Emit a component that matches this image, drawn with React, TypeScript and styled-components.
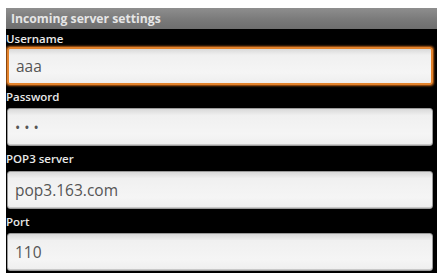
import React from 'react';
import styled, { createGlobalStyle } from 'styled-components';

const GlobalStyle = createGlobalStyle`
  html, body {
    margin: 0;
    padding: 0;
    background: #fff;
  }
  body {
    font-family: "Open Sans", "Noto Sans", sans-serif;
    overflow: hidden;
  }
`;

const Screen = styled.div`
  margin: 8px 0 0 6px;
  width: 431px;
  height: 265px;
  background: #000;
  display: flex;
  flex-direction: column;
  overflow: hidden;
`;

const TitleBar = styled.div`
  height: 21px;
  flex: none;
  display: flex;
  align-items: center;
  padding-left: 5px;
  background: linear-gradient(#8e8e8e, #787878 60%, #6e6e6e);
  color: #e6e6e6;
  font-size: 12.2px;
  font-weight: 700;
`;

const Label = styled.div<{ $h: number }>`
  height: ${(p) => p.$h}px;
  flex: none;
  display: flex;
  align-items: center;
  color: #e8e8e8;
  font-size: 11.5px;
  font-weight: 600;
`;

const Field = styled.div<{ $focused?: boolean }>`
  height: 38px;
  flex: none;
  box-sizing: border-box;
  margin: 0 4px 0 1px;
  border-radius: 3px;
  display: flex;
  align-items: center;
  padding-left: 7px;
  color: #555;
  font-size: 15.5px;
  background: linear-gradient(#d9d9d9, #f0f0f0 18%, #f5f5f5 70%, #eeeeee);
  border: ${(p) => (p.$focused ? '2px solid #e3832c' : '1px solid #9a9a9a')};
  box-shadow: ${(p) =>
    p.$focused ? '0 0 2px 1px #b65f18' : 'inset 0 -1px 0 #c8c8c8'};
`;

const Dots = styled.span`
  letter-spacing: 4px;
  font-size: 14px;
  color: #555;
`;

interface Row {
  label: string;
  labelHeight: number;
  value: React.ReactNode;
  focused?: boolean;
}

const rows: Row[] = [
  { label: 'Username', labelHeight: 18, value: 'aaa', focused: true },
  { label: 'Password', labelHeight: 23, value: <Dots>•••</Dots> },
  { label: 'POP3 server', labelHeight: 25, value: 'pop3.163.com' },
  { label: 'Port', labelHeight: 24, value: '110' },
];

export default function App() {
  return (
    <>
      <GlobalStyle />
      <Screen>
        <TitleBar>Incoming server settings</TitleBar>
        {rows.map((r) => (
          <React.Fragment key={r.label}>
            <Label $h={r.labelHeight}>{r.label}</Label>
            <Field $focused={r.focused}>{r.value}</Field>
          </React.Fragment>
        ))}
      </Screen>
    </>
  );
}
